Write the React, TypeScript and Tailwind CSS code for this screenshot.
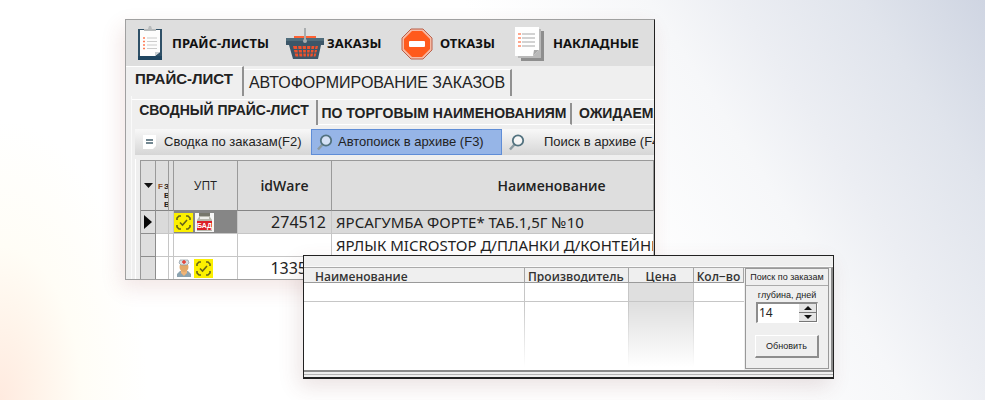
import React from "react";

const sans = "font-['Liberation_Sans',Arial,sans-serif]";
const noto = "font-['Noto_Sans',sans-serif]";
const open = "font-['Open_Sans',sans-serif]";

function ClipboardIcon() {
  return (
    <svg width="26" height="36" viewBox="0 0 26 36" aria-hidden="true">
      <rect x="1" y="3" width="24" height="31" fill="#2f5067" />
      <rect x="1" y="30" width="24" height="4" fill="#1f4560" />
      <path d="M3 4H23V26L18 30H3Z" fill="#fdfdfd" />
      <path d="M18 30V26H23Z" fill="#c9cfd3" />
      <path d="M7 5V3H11L12 0H14L15 3H19V5Z" fill="#b9bcbd" />
      <path d="M6 12H8M6 15.500H8M6 19H8M6 22.500H8" stroke="#ff7b55" strokeWidth="1.500" />
      <path d="M10 12H20M10 15.500H20M10 19H20M10 22.500H20" stroke="#cccccc" strokeWidth="1.200" />
    </svg>
  );
}

function BasketIcon() {
  return (
    <svg width="40" height="32" viewBox="0 0 40 32" aria-hidden="true">
      <rect x="9" y="8" width="22" height="4" fill="#ff6234" />
      <path d="M1 10H39V17H36L33 31H8L4 17H1Z" fill="#3b5668" />
      <path d="M1 10H39V13H1Z" fill="#4f6c7b" />
      <path d="M8 18H33L30.500 28.500H10.500Z" fill="#f0512b" />
      <path d="M12.500 18L14 29M17 18L18 29M21.500 18V29M26 18L24.500 29M30 18L28 29M7 21.500H34M8 25H33" stroke="#3b5668" strokeWidth="1.200" />
      <path d="M20 0V13" stroke="#a9adaf" strokeWidth="2" />
      <circle cx="20" cy="13" r="2" fill="#a9adaf" />
    </svg>
  );
}

function StopIcon() {
  return (
    <svg width="32" height="32" viewBox="0 0 32 32" aria-hidden="true">
      <path d="M10 1H22L31 10V22L22 31H10L1 22V10Z" fill="#f7b9a3" stroke="#b9604a" strokeWidth="1" />
      <path d="M11 3H21L29 11V21L21 29H11L3 21V11Z" fill="#ff5a1c" />
      <rect x="8" y="13" width="16" height="6" rx="1" fill="#fff" />
    </svg>
  );
}

function PagesIcon() {
  return (
    <svg width="30" height="36" viewBox="0 0 30 36" aria-hidden="true">
      <path d="M6 5H29V35H6Z" fill="#8e8e8e" />
      <path d="M3 3H26V32H3Z" fill="#b9b9b9" />
      <path d="M0 1H24V24L18 30H0Z" fill="#fefefe" />
      <path d="M18 30L19 24H24Z" fill="#a8a8a8" />
      <path d="M3 8H6M3 12H6M3 16H6M3 20H6" stroke="#ff8a68" strokeWidth="1.500" />
      <path d="M7 8H20M7 12H20M7 16H20M7 20H20" stroke="#c4c4c4" strokeWidth="1.500" />
    </svg>
  );
}

function SearchIcon() {
  return (
    <svg className="shrink-0" width="18" height="18" viewBox="0 0 18 18" fill="none" aria-hidden="true">
      <path d="M6.500 11.500L2 16.500" stroke="#8b9aa1" strokeWidth="2.500" />
      <circle cx="10" cy="7.500" r="5.200" fill="#ffffff" fillOpacity="0.600" stroke="#52727f" strokeWidth="1.800" />
    </svg>
  );
}

function SummaryIcon() {
  return (
    <svg width="14" height="14" viewBox="0 0 14 14" aria-hidden="true">
      <path d="M0 0H13V11L10 14H0Z" fill="#fff" />
      <path d="M3 5H10M3 8H10" stroke="#44606d" strokeWidth="1.500" />
    </svg>
  );
}

function ScanIcon() {
  return (
    <svg width="19" height="19" viewBox="0 0 19 19" fill="none" aria-hidden="true">
      <rect width="19" height="19" fill="#fcf000" />
      <path d="M3 7V5L5 3H7M12 3H14L16 5V7M16 12V14L14 16H12M7 16H5L3 14V12M6 9.500L8.500 12L13 7" stroke="#65651b" strokeWidth="1.600" />
    </svg>
  );
}

function BadIcon() {
  return (
    <svg width="19" height="19" viewBox="0 0 19 19" aria-hidden="true">
      <rect width="19" height="19" fill="#f6f6f6" />
      <path d="M4 0H15V4L17 7V18H2V7L4 4Z" fill="#b8b8ae" />
      <path d="M4 0H15V3H4Z" fill="#77776c" />
      <path d="M5 4H14V6H5Z" fill="#eeeeea" />
      <rect x="2" y="8" width="15" height="9" fill="#dc2028" />
      <text x="9.500" y="15" textAnchor="middle" fontSize="7" fontWeight="700" fill="#fff" fontFamily="Liberation Sans">БАД</text>
    </svg>
  );
}

function DoctorIcon() {
  return (
    <svg width="16" height="18" viewBox="0 0 16 18" aria-hidden="true">
      <path d="M1 18V15L4 12H12L15 15V18Z" fill="#8ba3b0" />
      <path d="M5 11H11V14L8 17L5 14Z" fill="#efb477" />
      <ellipse cx="8" cy="8" rx="4.500" ry="5" fill="#e2a868" />
      <path d="M3 4L4 1H12L13 4L11 6H5Z" fill="#d7dde1" stroke="#8d9ba5" strokeWidth="0.700" />
      <path d="M8 1V5M6 3H10" stroke="#e33b31" strokeWidth="1.400" />
    </svg>
  );
}

function ToolbarButton({ icon, label, className }: { icon: React.ReactNode; label: string; className: string }) {
  return (
    <button className={`flex shrink-0 items-center ${className}`}>
      {icon}
      <span className="whitespace-nowrap">{label}</span>
    </button>
  );
}

function PriceTable() {
  const headCell = "border-r border-b border-[#9a9a9a] border-b-[#858585] bg-[#dedede] p-0 font-semibold";
  const cell = "h-[23px] border-r border-b border-[#c6c6c6] p-0";
  const marker = "h-[23px] border-r border-b border-[#8d8d8d] bg-[#dedede] p-0";
  return (
    <table className={`w-full table-fixed border-separate border-spacing-0 border-t border-l border-[#999] text-[#222] ${noto}`}>
      <colgroup>
        <col className="w-[15px]" />
        <col className="w-[13px]" />
        <col className="w-[5px]" />
        <col className="w-[64px]" />
        <col className="w-[94px]" />
        <col />
      </colgroup>
      <thead className={open}>
        <tr className="h-[50px]">
          <th className={headCell}>
            <svg className="mx-auto" width="9" height="5" viewBox="0 0 9 5" aria-hidden="true"><path d="M0 0H9L4.500 5Z" fill="#111" /></svg>
          </th>
          <th className={headCell}>
            <div className={`flex h-12 justify-between overflow-hidden pt-5 pl-[2px] text-[8px] leading-[9px] ${sans}`}>
              <span className="text-[#8a4a20]">F</span>
              <span className="w-1 overflow-hidden">З<br />В<br />В</span>
            </div>
          </th>
          <th className={headCell} />
          <th className={`${headCell} text-[12px] !font-normal`}>УПТ</th>
          <th className={`${headCell} text-[14px]`}>idWare</th>
          <th className={`${headCell} text-[14px]`}>
            <div className="pl-[118px]">Наименование</div>
          </th>
        </tr>
      </thead>
      <tbody className="text-[15px] leading-[22px]">
        <tr className="bg-[#dadada]">
          <td className={marker}>
            <svg className="mx-auto" width="8" height="14" viewBox="0 0 8 14" aria-hidden="true"><path d="M0 0L8 7L0 14Z" fill="#080808" /></svg>
          </td>
          <td className={cell} />
          <td className={cell} />
          <td className={`${cell} bg-[#868686]`}>
            <div className="flex gap-[2px]"><ScanIcon /><BadIcon /></div>
          </td>
          <td className={`${cell} pr-[5px] text-right text-[16px]`}>274512</td>
          <td className={`${cell} overflow-hidden pl-1 whitespace-nowrap`}>ЯРСАГУМБА ФОРТЕ* ТАБ.1,5Г №10</td>
        </tr>
        <tr className="bg-white">
          <td className={marker} />
          <td className={cell} />
          <td className={cell} />
          <td className={cell} />
          <td className={cell} />
          <td className={`${cell} overflow-hidden pl-1 whitespace-nowrap`}>ЯРЛЫК MICROSTOP Д/ПЛАНКИ Д/КОНТЕЙНЕР</td>
        </tr>
        <tr className="bg-white">
          <td className={marker} />
          <td className={cell} />
          <td className={cell} />
          <td className={cell}>
            <div className="flex gap-[2px] pl-[2px]"><DoctorIcon /><ScanIcon /></div>
          </td>
          <td className={`${cell} pr-[24px] text-right text-[16px]`}>1335</td>
          <td className={cell} />
        </tr>
      </tbody>
    </table>
  );
}

function PriceWindow() {
  return (
    <section className="absolute top-[19px] left-[125px] w-[530px] overflow-hidden border border-[#a0a0a0] border-r-[#222] bg-[#efefef] shadow-[-4px_8px_20px_rgba(150,50,40,0.12)]">
      <nav className={`flex h-[46px] items-center bg-[#dedede] pt-[2px] pl-[11px] text-[13px] font-bold text-[#111] ${noto}`}>
        <ToolbarButton icon={<ClipboardIcon />} label="ПРАЙС-ЛИСТЫ" className="w-[148px] gap-[9px]" />
        <ToolbarButton icon={<BasketIcon />} label="ЗАКАЗЫ" className="w-[116px] gap-[2px]" />
        <ToolbarButton icon={<StopIcon />} label="ОТКАЗЫ" className="w-[114px] gap-[7px]" />
        <ToolbarButton icon={<PagesIcon />} label="НАКЛАДНЫЕ" className="gap-[8px]" />
      </nav>
      <div className={`flex h-[30px] items-end text-[#222] ${sans}`}>
        <button className="h-[30px] w-[118px] border-t border-r-2 border-t-white border-r-[#919191] pb-1 text-[15px] font-bold whitespace-nowrap">ПРАЙС-ЛИСТ</button>
        <button className="h-[27px] w-[268px] border-t border-r-2 border-t-white border-r-[#919191] text-[16px] whitespace-nowrap">АВТОФОРМИРОВАНИЕ ЗАКАЗОВ</button>
      </div>
      <div className="ml-[5px] border-l border-[#fafafa] pt-[3px]">
        <div className={`flex h-[26px] items-end border-t border-white text-[14px] font-bold text-[#222] ${sans}`}>
          <button className="h-[25px] w-[186px] shrink-0 border-r-2 border-[#919191] pb-1 whitespace-nowrap">СВОДНЫЙ ПРАЙС-ЛИСТ</button>
          <button className="h-[22px] w-[254px] shrink-0 border-r-2 border-b border-r-[#919191] border-b-white whitespace-nowrap">ПО ТОРГОВЫМ НАИМЕНОВАНИЯМ</button>
          <button className="h-[22px] grow border-b border-white pl-[7px] text-left whitespace-nowrap">ОЖИДАЕМЫЕ</button>
        </div>
        <div className={`mt-1 ml-[3px] flex h-[26px] bg-linear-to-b from-[#f8f8f8] to-[#d6d6d6] text-[13px] text-[#222] ${sans}`}>
          <button className="flex w-[176px] shrink-0 items-center gap-[7px] pl-2 whitespace-nowrap"><SummaryIcon />Сводка по заказам(F2)</button>
          <button className="flex w-[191px] shrink-0 items-center gap-1 border border-[#5f8dd7] bg-[#96b5e7] pl-1 whitespace-nowrap"><SearchIcon />Автопоиск в архиве (F3)</button>
          <button className="flex shrink-0 items-center gap-[18px] pl-[6px] whitespace-nowrap"><SearchIcon />Поиск в архиве (F4)</button>
        </div>
        <div className="mt-1 ml-[3px] h-[120px] overflow-hidden border-l border-white pt-px pl-1">
          <PriceTable />
        </div>
      </div>
    </section>
  );
}

function OrdersWindow() {
  const head = "h-[15px] border-r border-b border-[#a5a5a5] border-b-[#9a9a9a] bg-[#efefef] p-0 font-semibold";
  const label = "h-[14px] overflow-hidden leading-[18px]";
  return (
    <section className="absolute top-[255px] left-[303px] flex w-[531px] flex-col border border-b-2 border-[#222] bg-[#efefef] pb-[2px] shadow-[-4px_8px_20px_rgba(110,60,60,0.14)]">
      <div className="h-[11px] shrink-0 border-b border-[#fafafa]" />
      <div className="flex border-t border-r-2 border-b-2 border-t-[#aaa] border-r-[#8b8b8b] border-b-[#8b8b8b]">
        <div className="relative grow bg-white">
          <table className={`w-full table-fixed border-separate border-spacing-0 text-[#333] ${open}`}>
            <colgroup>
              <col />
              <col className="w-[104px]" />
              <col className="w-[65px]" />
              <col className="w-[50px]" />
            </colgroup>
            <thead className="text-[12px]">
              <tr>
                <th className={head}><div className={`${label} pl-[11px] text-left`}>Наименование</div></th>
                <th className={head}><div className={`${label} pl-[3px] text-left`}>Производитель</div></th>
                <th className={head}><div className={label}>Цена</div></th>
                <th className={head}><div className={label}>Кол−во</div></th>
              </tr>
            </thead>
            <tbody>
              <tr className="h-[19px]">
                <td className="border-r border-b border-[#c6c6c6]" />
                <td className="border-r border-b border-[#c6c6c6]" />
                <td className="border-r border-b border-[#c6c6c6] bg-[#dfdfdf]" />
                <td className="border-b border-[#c6c6c6]" />
              </tr>
              <tr className="h-[68px]">
                <td className="border-r border-[#c6c6c6]" />
                <td className="border-r border-[#c6c6c6]" />
                <td className="border-r border-[#c6c6c6] bg-[#dfdfdf]" />
                <td />
              </tr>
            </tbody>
          </table>
          <div className="pointer-events-none absolute inset-x-0 bottom-0 h-[66px] bg-linear-to-b from-transparent to-white to-95%" />
        </div>
        <form className={`mr-[2px] ml-px h-[101px] w-[84px] shrink-0 border border-[#999] text-center text-[9px] text-[#222] ${sans}`} onSubmit={(e) => e.preventDefault()}>
          <h2 className="h-[17px] border-b border-[#aaa] leading-[16px] whitespace-nowrap">Поиск по заказам</h2>
          <label htmlFor="depth" className="block pt-[2px] leading-[14px]">глубина, дней</label>
          <div className="mx-auto flex h-[21px] w-[62px] border border-t-2 border-l-2 border-[#8d8d8d] border-r-white border-b-white bg-white">
            <input id="depth" type="text" inputMode="numeric" defaultValue="14" className={`w-0 min-w-0 grow pl-px text-[12px] outline-none ${noto}`} />
            <div className="flex w-[18px] flex-col">
              <button type="button" aria-label="Больше" className="flex grow items-center justify-center border-r border-b border-[#777] bg-[#e4e4e4]">
                <svg width="8" height="4" viewBox="0 0 8 4"><path d="M0 4L4 0L8 4Z" fill="#111" /></svg>
              </button>
              <button type="button" aria-label="Меньше" className="flex grow items-center justify-center border-r border-b border-[#777] bg-[#e4e4e4]">
                <svg width="8" height="4" viewBox="0 0 8 4"><path d="M0 0L4 4L8 0Z" fill="#111" /></svg>
              </button>
            </div>
          </div>
          <button type="submit" className="mt-3 h-[23px] w-[64px] border border-r-2 border-b-2 border-white border-r-[#8d8d8d] border-b-[#8d8d8d] leading-[18px]">Обновить</button>
        </form>
      </div>
      <div className="mt-[2px] border-t border-[#b5b5b5]" />
    </section>
  );
}

export default function App() {
  return (
    <main className="relative h-screen min-h-[400px] w-full overflow-hidden bg-white bg-[radial-gradient(ellipse_15%_70%_at_0%_100%,#ffeadf_0%,#fff3e9_25%,#fffdf6_55%,transparent_100%),linear-gradient(57deg,#ffffff_58%,#f6f7f9_73%,#eceef3_80%,#e0e4ec_90%,#cfd5e2_100%)]">
      <PriceWindow />
      <OrdersWindow />
    </main>
  );
}
